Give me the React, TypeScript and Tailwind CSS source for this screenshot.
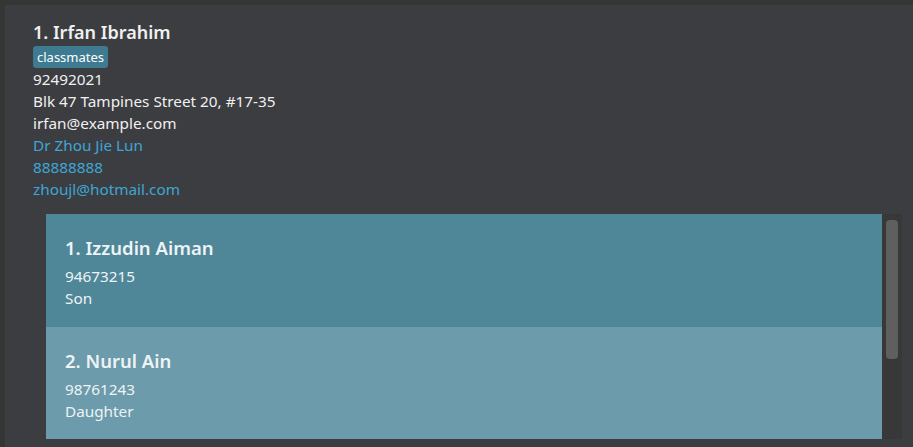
export default function App() {
  const font = { fontFamily: '"Segoe UI", "Noto Sans", "Open Sans", sans-serif' };
  const kids = [
    { name: "1. Izzudin Aiman", phone: "94673215", rel: "Son", bg: "bg-[#4f8799]" },
    { name: "2. Nurul Ain", phone: "98761243", rel: "Daughter", bg: "bg-[#6c9bab]" },
  ];

  return (
    <div className="h-[447px] w-[913px] bg-[#353535] pl-[5px] pt-[5px] overflow-hidden" style={font}>
      <div className="h-full w-full bg-[#3c3d40] pl-[28px] pt-[14px]">
        <div className="text-[18px] font-semibold leading-[26px] text-[#f0f0f0]">1. Irfan Ibrahim</div>
        <div className="mt-[1px] flex">
          <span className="rounded-[3px] bg-[#3e7b91] px-[4px] text-[13px] leading-[22px] text-white">classmates</span>
        </div>
        <div className="text-[15.3px] leading-[22px] text-[#f0f0f0]">
          <div>92492021</div>
          <div>Blk 47 Tampines Street 20, #17-35</div>
          <div>irfan@example.com</div>
        </div>
        <div className="text-[15.3px] leading-[22px] text-[#3ea6d6]">
          <div>Dr Zhou Jie Lun</div>
          <div>88888888</div>
          <div>zhoujl@hotmail.com</div>
        </div>

        <div className="mt-[14px] ml-[13px] flex h-[225px] w-[856px] bg-[#383838]">
          <div className="flex w-[838px] flex-col">
            {kids.map((k) => (
              <div key={k.name} className={`h-[113px] pl-[19px] pt-[19px] ${k.bg}`}>
                <div className="text-[18.5px] font-semibold leading-[30px] text-[#eef3f5]">{k.name}</div>
                <div className="mt-[2px] text-[15.3px] leading-[22px] text-[#eef3f5]">{k.phone}</div>
                <div className="text-[15.3px] leading-[22px] text-[#eef3f5]">{k.rel}</div>
              </div>
            ))}
          </div>
          <div className="flex-1 px-[4px] pt-[6px]">
            <div className="h-[139px] w-[12px] rounded-[4px] bg-[#5f5f5f]" />
          </div>
        </div>
      </div>
    </div>
  );
}
